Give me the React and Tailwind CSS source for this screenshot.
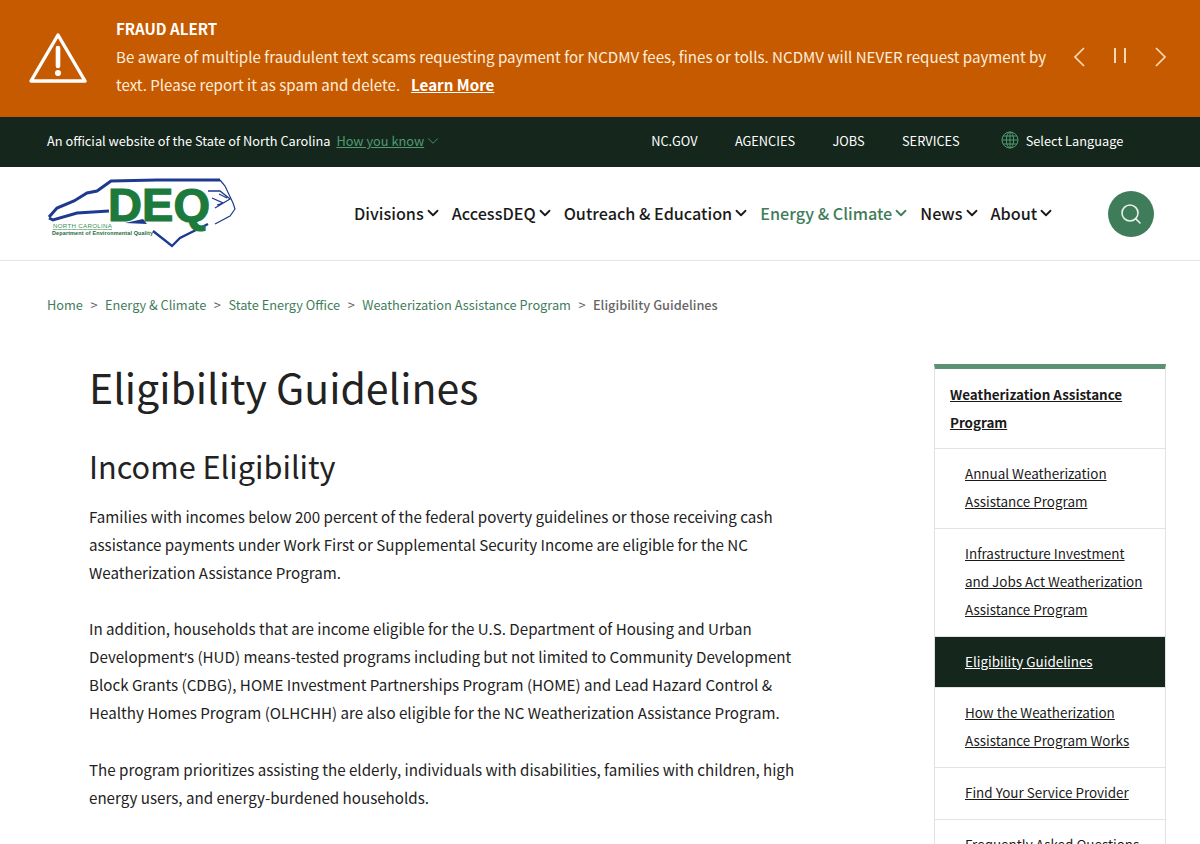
import React from "react";
import { ChevronDown, Search } from "lucide-react";

function Logo() {
  return (
    <svg width="190" height="72" viewBox="0 0 190 72" className="block">
      <path d="M2 39 L10 30 L27 23 L40 15 L50 13 L64 3 L110 2 L173 2" fill="none" stroke="#1d3a8f" strokeWidth="3" />
      <path d="M173 2 L178 8 L186 25 L188 31 L183 38 L168 46" fill="none" stroke="#1d3a8f" strokeWidth="1.2" />
      <path d="M2 40 L6 42 L30 35 L62 33" fill="none" stroke="#1d3a8f" strokeWidth="3" />
      <path d="M106 53 L125 68 L133 60 L161 46" fill="none" stroke="#1d3a8f" strokeWidth="2.4" />
      <path d="M161 13 L173 13 L183 21 L168 30 M165 20 L176 25 L170 27 M172 16 L180 20" fill="none" stroke="#1d3a8f" strokeWidth="1.3" />
      <text x="61" y="43" fontFamily="'Liberation Sans', sans-serif" fontWeight="700" fontSize="47" fill="#1c7a3c" stroke="#1c7a3c" strokeWidth="1.2" textLength="102" lengthAdjust="spacingAndGlyphs">DEQ</text>
      <path d="M78 45 L96 41 L100 46 Z" fill="#1d3a8f" />
      <text x="6" y="50" fontFamily="'Liberation Sans', sans-serif" fontSize="6.2" fill="#3a8f58" textDecoration="underline" textLength="59">NORTH CAROLINA</text>
      <text x="5" y="57" fontFamily="'Liberation Sans', sans-serif" fontWeight="700" fontSize="5.5" fill="#1c6a3a" textLength="101">Department of Environmental Quality</text>
    </svg>
  );
}

function NavItem({ label, active }) {
  return (
    <a className={"flex items-center whitespace-nowrap text-[16.2px] leading-7 font-medium " + (active ? "text-[#3f7d5a]" : "text-[#1a1a1a]")}>
      {label}
      <ChevronDown size={18} strokeWidth={2.4} />
    </a>
  );
}

function Crumb({ label }) {
  return (
    <>
      <a className="text-[#3f7d5a]">{label}</a>
      <span className="text-[#555] mx-[7.5px]">&gt;</span>
    </>
  );
}

function SideLink({ lines, active }) {
  return (
    <li className={"border-t border-[#e2e2e2] pl-[30px] pr-[14px] pt-[10px] pb-[12.8px] text-[13.45px] leading-7 underline " + (active ? "bg-[#15271c] text-white" : "text-[#1a1a1a]")}>
      {lines}
    </li>
  );
}

export default function App() {
  return (
    <div className="h-[844px] overflow-hidden bg-white text-[#222] font-['Noto_Sans_CJK_SC','Source_Sans_Pro',sans-serif]">
      <section className="h-[117px] bg-[#c65a00] flex text-[#fdeedd]">
        <div className="w-[116px] pl-[29px] pt-[32px] shrink-0">
          <svg width="58" height="52" viewBox="0 0 58 52" fill="none">
            <path d="M29 3 L56 49 H2 Z" stroke="white" strokeWidth="3.4" strokeLinejoin="round" />
            <path d="M29 16 V34" stroke="white" strokeWidth="4.6" strokeLinecap="round" />
            <circle cx="29" cy="41" r="3" fill="white" />
          </svg>
        </div>
        <div className="w-[942px] pt-[14px] text-[15.12px] leading-7">
          <div className="font-bold text-white">FRAUD ALERT</div>
          <p>
            Be aware of multiple fraudulent text scams requesting payment for NCDMV fees, fines or tolls. NCDMV will NEVER request payment by text. Please report it as spam and delete.
            <a className="font-bold underline text-white ml-[11px]">Learn More</a>
          </p>
        </div>
        <div className="flex pt-[47px] pl-[15px]">
          <svg width="12" height="20" viewBox="0 0 12 20" fill="none" stroke="#fbd9b4" strokeWidth="1.7">
            <path d="M11 1 L2 10 L11 19" />
          </svg>
          <div className="flex gap-[8px] ml-[29px] mt-[1px]">
            <span className="block w-[2px] h-[15px] bg-[#fbd9b4]"></span>
            <span className="block w-[2px] h-[15px] bg-[#fbd9b4]"></span>
          </div>
          <svg width="12" height="20" viewBox="0 0 12 20" fill="none" stroke="#fbd9b4" strokeWidth="1.7" className="ml-[29px]">
            <path d="M1 1 L10 10 L1 19" />
          </svg>
        </div>
      </section>

      <section className="h-[50px] pb-[2px] bg-[#15271c] flex items-center pl-[47px] text-[12.77px] text-white whitespace-nowrap">
        <span>An official website of the State of North Carolina</span>
        <a className="ml-[6px] text-[#4f9a70] underline">How you know</a>
        <ChevronDown size={18} strokeWidth={1.2} className="text-[#4f9a70]" />
        <nav className="ml-[209px] flex gap-[37.4px]">
          <a>NC.GOV</a>
          <a>AGENCIES</a>
          <a>JOBS</a>
          <a>SERVICES</a>
        </nav>
        <svg width="18" height="18" viewBox="0 0 18 18" fill="none" stroke="#4f9a70" strokeWidth="1" className="ml-[41px] mb-[3px]">
          <circle cx="9" cy="9" r="8" />
          <ellipse cx="9" cy="9" rx="3.6" ry="8" />
          <path d="M9 1V17M1 9H17M2 5H16M2 13H16" />
        </svg>
        <span className="ml-[7px]">Select Language</span>
      </section>

      <header className="h-[94px] border-b border-[#e5e5e5] flex items-center pl-[47px]">
        <div className="w-[190px] shrink-0"><Logo /></div>
        <nav className="ml-[117px] flex gap-[10px] -mt-[2px]">
          <NavItem label="Divisions" />
          <NavItem label="AccessDEQ" />
          <NavItem label="Outreach & Education" />
          <NavItem label="Energy & Climate" active />
          <NavItem label="News" />
          <NavItem label="About" />
        </nav>
        <button className="ml-[53px] w-[46px] h-[46px] rounded-full bg-[#3f7d5a] flex items-center justify-center text-[#e8f2ec]">
          <Search size={24} strokeWidth={1.6} />
        </button>
      </header>

      <div className="pl-[47px] pt-[33px] text-[12.75px] leading-[22px] flex">
        <Crumb label="Home" />
        <Crumb label="Energy & Climate" />
        <Crumb label="State Energy Office" />
        <Crumb label="Weatherization Assistance Program" />
        <span className="text-[#666] font-medium">Eligibility Guidelines</span>
      </div>

      <div className="flex mt-[46px]">
        <main className="w-[934px] pl-[89px] pr-[138px] shrink-0">
          <h1 className="text-[41px] leading-[50px] -mt-[1px] text-[#222] font-normal">Eligibility Guidelines</h1>
          <h2 className="text-[30.7px] leading-[40px] mt-[35px] text-[#222]">Income Eligibility</h2>
          <p className="text-[15.15px] leading-7 mt-[16px]">
            Families with incomes below 200 percent of the federal poverty guidelines or those receiving cash assistance payments under Work First or Supplemental Security Income are eligible for the NC Weatherization Assistance Program.
          </p>
          <p className="text-[15.15px] leading-7 mt-[28px]">
            In addition, households that are income eligible for the U.S. Department of Housing and Urban Development<span className="font-['Noto_Sans'] leading-none">’</span>s (HUD) means-tested programs including but not limited to Community Development Block Grants (CDBG), HOME Investment Partnerships Program (HOME) and Lead Hazard Control &amp; Healthy Homes Program (OLHCHH) are also eligible for the NC Weatherization Assistance Program.
          </p>
          <p className="text-[15.15px] leading-7 mt-[29px]">
            The program prioritizes assisting the elderly, individuals with disabilities, families with children, high energy users, and energy-burdened households.
          </p>
        </main>
        <aside className="w-[232px] shrink-0 mt-[2px]">
          <div className="border-t-[5px] border-[#5a9273] border-x border-x-[#e2e2e2]">
            <a className="block px-[15px] pt-[11px] pb-[12px] text-[13.4px] leading-7 font-semibold underline text-[#1a1a1a]">Weatherization Assistance Program</a>
            <ul>
              <SideLink lines="Annual Weatherization Assistance Program" />
              <SideLink lines="Infrastructure Investment and Jobs Act Weatherization Assistance Program" />
              <SideLink lines="Eligibility Guidelines" active />
              <SideLink lines="How the Weatherization Assistance Program Works" />
              <SideLink lines="Find Your Service Provider" />
              <SideLink lines="Frequently Asked Questions" />
            </ul>
          </div>
        </aside>
      </div>
    </div>
  );
}
